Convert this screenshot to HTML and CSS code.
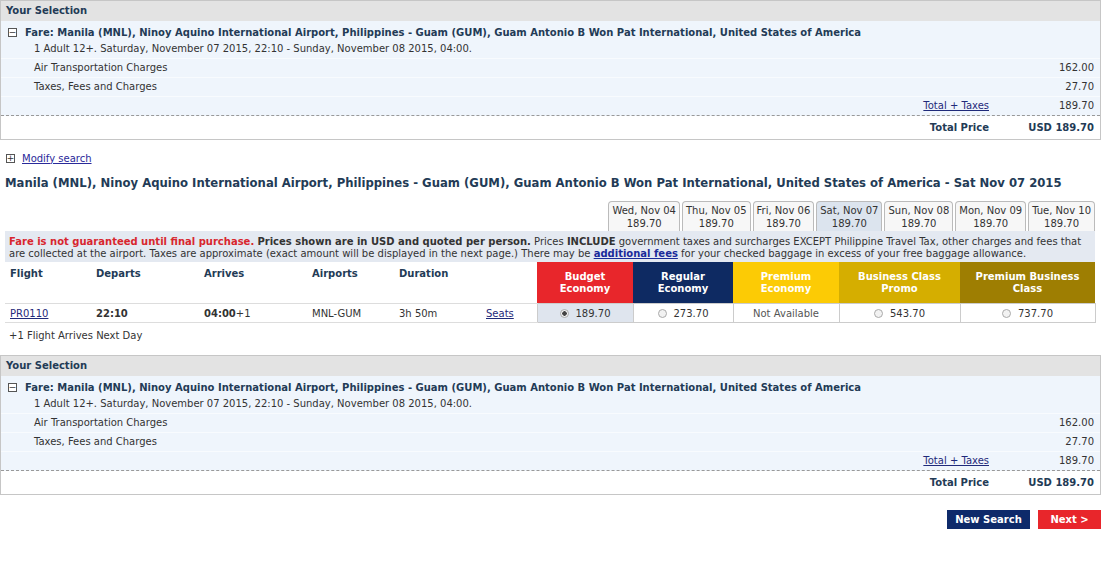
FILE: index.html
```html
<!DOCTYPE html>
<html lang="en">
<head>
    <meta charset="UTF-8">
    <title>Select Flight</title>
    <link rel="stylesheet" href="styles.css">
</head>
<body>
<div class="page">

    <!-- Your Selection (top) -->
    <div class="selection">
        <div class="sel-head">Your Selection</div>
        <div class="sel-body">
            <div class="fare-line"><span class="box-icon">&minus;</span>Fare: Manila (MNL), Ninoy Aquino International Airport, Philippines - Guam (GUM), Guam Antonio B Won Pat International, United States of America</div>
            <div class="sub-line">1 Adult 12+. Saturday, November 07 2015, 22:10 - Sunday, November 08 2015, 04:00.</div>
            <div class="charge-row"><span class="label">Air Transportation Charges</span><span class="mid"></span><span class="amt">162.00</span></div>
            <div class="charge-row"><span class="label">Taxes, Fees and Charges</span><span class="mid"></span><span class="amt">27.70</span></div>
            <div class="charge-row"><span class="label"></span><span class="mid"><a href="#">Total + Taxes</a></span><span class="amt">189.70</span></div>
        </div>
        <div class="total-row"><span class="label"></span><span class="mid">Total Price</span><span class="amt">USD 189.70</span></div>
    </div>

    <div class="modify"><span class="box-icon">+</span><a href="#">Modify search</a></div>

    <h2 class="route">Manila (MNL), Ninoy Aquino International Airport, Philippines - Guam (GUM), Guam Antonio B Won Pat International, United States of America - Sat Nov 07 2015</h2>

    <!-- Tabs de datas -->
    <div class="date-tabs">
        <div class="tab">Wed, Nov 04<br>189.70</div>
        <div class="tab">Thu, Nov 05<br>189.70</div>
        <div class="tab">Fri, Nov 06<br>189.70</div>
        <div class="tab active">Sat, Nov 07<br>189.70</div>
        <div class="tab">Sun, Nov 08<br>189.70</div>
        <div class="tab">Mon, Nov 09<br>189.70</div>
        <div class="tab">Tue, Nov 10<br>189.70</div>
    </div>

    <div class="notice">
        <span class="warn">Fare is not guaranteed until final purchase.</span> <b>Prices shown are in USD and quoted per person.</b> Prices <b>INCLUDE</b> government taxes and surcharges EXCEPT Philippine Travel Tax, other charges and fees that are collected at the airport. Taxes are approximate (exact amount will be displayed in the next page.) There may be <a href="#">additional fees</a> for your checked baggage in excess of your free baggage allowance.
    </div>

    <!-- Tabela de voos -->
    <table class="flights">
        <colgroup>
            <col style="width:86px">
            <col style="width:108px">
            <col style="width:108px">
            <col style="width:87px">
            <col style="width:87px">
            <col style="width:56px">
            <col style="width:96px">
            <col style="width:100px">
            <col style="width:106px">
            <col style="width:121px">
            <col style="width:135px">
        </colgroup>
        <tr class="head">
            <th>Flight</th>
            <th>Departs</th>
            <th>Arrives</th>
            <th>Airports</th>
            <th>Duration</th>
            <th></th>
            <th class="fare budget">Budget<br>Economy</th>
            <th class="fare regular">Regular<br>Economy</th>
            <th class="fare premium">Premium<br>Economy</th>
            <th class="fare promo">Business Class<br>Promo</th>
            <th class="fare business">Premium Business<br>Class</th>
        </tr>
        <tr class="row">
            <td><a href="#">PR0110</a></td>
            <td><b>22:10</b></td>
            <td><b>04:00</b>+1</td>
            <td>MNL-GUM</td>
            <td>3h 50m</td>
            <td><a href="#">Seats</a></td>
            <td class="price selected"><span class="radio on"></span>189.70</td>
            <td class="price"><span class="radio"></span>273.70</td>
            <td class="price na">Not Available</td>
            <td class="price"><span class="radio"></span>543.70</td>
            <td class="price"><span class="radio"></span>737.70</td>
        </tr>
    </table>

    <div class="next-day">+1 Flight Arrives Next Day</div>

    <!-- Your Selection (bottom) -->
    <div class="selection">
        <div class="sel-head">Your Selection</div>
        <div class="sel-body">
            <div class="fare-line"><span class="box-icon">&minus;</span>Fare: Manila (MNL), Ninoy Aquino International Airport, Philippines - Guam (GUM), Guam Antonio B Won Pat International, United States of America</div>
            <div class="sub-line">1 Adult 12+. Saturday, November 07 2015, 22:10 - Sunday, November 08 2015, 04:00.</div>
            <div class="charge-row"><span class="label">Air Transportation Charges</span><span class="mid"></span><span class="amt">162.00</span></div>
            <div class="charge-row"><span class="label">Taxes, Fees and Charges</span><span class="mid"></span><span class="amt">27.70</span></div>
            <div class="charge-row"><span class="label"></span><span class="mid"><a href="#">Total + Taxes</a></span><span class="amt">189.70</span></div>
        </div>
        <div class="total-row"><span class="label"></span><span class="mid">Total Price</span><span class="amt">USD 189.70</span></div>
    </div>

    <div class="actions">
        <button class="btn-new">New Search</button>
        <button class="btn-next">Next &gt;</button>
    </div>

</div>
</body>
</html>
```

FILE: styles.css
```css
body {
    margin: 0;
    font-family: "DejaVu Sans", Verdana, sans-serif;
    font-size: 10px;
    color: #333;
    background: #fff;
}
a {
    color: #1f2a7a;
}
.page {
    width: 1101px;
}

/* Your Selection */
.selection {
    border: 1px solid #c6c6c6;
}
.sel-head {
    background: #e3e3e3;
    height: 20px;
    line-height: 20px;
    padding-left: 5px;
    font-weight: bold;
    color: #233b56;
}
.sel-body {
    background: #eff5fc;
    border-bottom: 1px dashed #999;
}
.fare-line {
    display: flex;
    align-items: center;
    height: 22px;
    padding-left: 7px;
    font-weight: bold;
    color: #233b56;
}
.box-icon {
    display: inline-flex;
    align-items: center;
    justify-content: center;
    width: 7px;
    height: 7px;
    border: 1px solid #555;
    background: #fff;
    font-size: 9px;
    line-height: 1;
    font-weight: normal;
    color: #333;
    margin-right: 8px;
}
.sub-line {
    height: 15px;
    line-height: 12px;
    padding-left: 33px;
}
.charge-row,
.total-row {
    display: flex;
    height: 18px;
    line-height: 18px;
    border-top: 1px solid #f8fbfe;
}
.charge-row .label,
.total-row .label {
    flex: 1;
    padding-left: 33px;
}
.charge-row .mid,
.total-row .mid {
    width: 122px;
    text-align: right;
}
.charge-row .amt,
.total-row .amt {
    width: 105px;
    text-align: right;
    padding-right: 6px;
}
.total-row {
    height: 23px;
    line-height: 23px;
    border-top: none;
    font-weight: bold;
    color: #233b56;
}

/* Busca */
.modify {
    display: flex;
    align-items: center;
    margin: 12px 0 0 6px;
    height: 12px;
}
.modify .box-icon {
    margin-right: 7px;
}
.modify a {
    color: #2a2a9a;
}
.route {
    margin: 12px 0 0 5px;
    font-size: 11.65px;
    line-height: 15px;
    color: #233b56;
    white-space: nowrap;
}

.date-tabs {
    display: flex;
    justify-content: flex-end;
    gap: 2px;
    margin: 10px 6px 0 0;
}
.tab {
    border: 1px solid #bbb;
    border-bottom: none;
    border-radius: 4px 4px 0 0;
    background: #f7f7f7;
    padding: 2px 3px 1px 3px;
    text-align: center;
    line-height: 13px;
}
.tab.active {
    background: #dce4ee;
}

.notice {
    margin: 0 6px 0 5px;
    background: #e4e9f1;
    padding: 5px 3px 2px 4px;
    line-height: 12px;
}
.notice .warn {
    color: #d8262e;
    font-weight: bold;
}
.notice a {
    font-weight: bold;
    color: #1a2a9a;
}

/* Tabela */
.flights {
    width: 1090px;
    margin-left: 5px;
    border-collapse: collapse;
    table-layout: fixed;
}
.flights th {
    height: 35px;
    vertical-align: top;
    text-align: left;
    padding: 6px 0 0 5px;
    color: #233b56;
}
.flights th.fare {
    vertical-align: middle;
    text-align: center;
    padding: 0;
    color: #fff;
    line-height: 12px;
}
.fare.budget { background: #e8262b; }
.fare.regular { background: #0e2a62; }
.fare.premium { background: #fccb05; color: #fff2a8; }
.fare.promo { background: #d5ae00; }
.fare.business { background: #9e7e02; }
.flights td {
    height: 18px;
    padding: 0 0 0 5px;
    border-top: 1px solid #ddd;
    border-bottom: 1px solid #ddd;
}
.flights td.price {
    text-align: center;
    padding: 0;
    border: 1px solid #ccc;
}
.flights td.selected {
    background: #dfe5ee;
}
.flights td.na {
    color: #555;
}
.radio {
    display: inline-block;
    width: 9px;
    height: 9px;
    border: 1px solid #aaa;
    border-radius: 50%;
    background: #f2f2f2;
    vertical-align: -1px;
    margin-right: 7px;
    box-sizing: border-box;
}
.radio.on {
    background: radial-gradient(circle, #444 0 2px, #f2f2f2 2.5px);
}

.next-day {
    margin: 7px 0 13px 9px;
    line-height: 12px;
}

.actions {
    display: flex;
    justify-content: flex-end;
    gap: 8px;
    margin-top: 15px;
}
.actions button {
    border: none;
    color: #fff;
    font-family: inherit;
    font-size: 10px;
    font-weight: bold;
    height: 19px;
    white-space: nowrap;
    cursor: pointer;
}
.btn-new {
    background: #0e2a6a;
    width: 83px;
}
.btn-next {
    background: #e8262b;
    width: 63px;
}
```
